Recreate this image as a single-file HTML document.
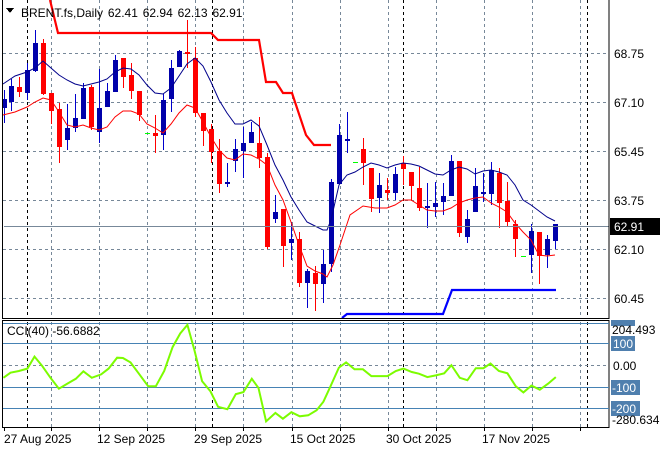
<!DOCTYPE html>
<html><head><meta charset="utf-8"><style>
body{margin:0;background:#fff;width:660px;height:450px;overflow:hidden;font-family:"Liberation Sans",sans-serif}
svg{position:absolute;left:0;top:0}
text{font-family:"Liberation Sans",sans-serif;font-size:12px;fill:#000}
</style></head><body>
<svg id="s" width="660" height="450" viewBox="0 0 660 450" xmlns="http://www.w3.org/2000/svg" shape-rendering="crispEdges">
<g id="grid" stroke="#778899" stroke-dasharray="3,3" stroke-width="1"></g>
<g id="cand"></g>
<polyline id="ma1" fill="none" stroke="#00008b" stroke-width="1" shape-rendering="auto"/>
<polyline id="ma2" fill="none" stroke="#ff0000" stroke-width="1" shape-rendering="auto"/>
<polyline fill="none" stroke="#ff0000" stroke-width="2.2" shape-rendering="auto" points="50,0 58,33 211,33 218,40 259,40 266,82 276,82 283,93 292,93 306,135 314,145 331,145"/>
<polyline fill="none" stroke="#0000ff" stroke-width="2.2" shape-rendering="auto" points="342,318 347,314 443,314 452,290 556,290"/>
<line x1="4" y1="226.5" x2="609" y2="226.5" stroke="#778899"/>
<rect x="2.5" y="-1" width="606.5" height="319.5" fill="none" stroke="#000"/>
<rect x="2.5" y="320.5" width="606.5" height="107" fill="none" stroke="#000"/>
<g font-size="12">
<text x="614" y="58">68.75</text><text x="614" y="107">67.10</text><text x="614" y="156">65.45</text>
<text x="614" y="205">63.75</text><text x="614" y="254">62.10</text><text x="614" y="303">60.45</text>
</g>
<rect x="610" y="218" width="50" height="17" fill="#000"/><text x="614" y="231" fill="#fff" style="fill:#fff">62.91</text>
<path d="M6,8 L14,8 L10,13 Z" fill="#000"/>
<text x="21" y="17" style="word-spacing:1.5px">BRENT.fs,Daily  62.41 62.94 62.13 62.91</text>
<text x="7" y="335">CCI(40) -56.6882</text>
<line x1="3" y1="323.5" x2="609" y2="323.5" stroke="#4682b4"/>
<line x1="3" y1="343.5" x2="609" y2="343.5" stroke="#4682b4"/>
<line x1="3" y1="365.5" x2="609" y2="365.5" stroke="#778899" stroke-dasharray="3,3"/>
<line x1="3" y1="387.5" x2="609" y2="387.5" stroke="#4682b4"/>
<line x1="3" y1="408.5" x2="609" y2="408.5" stroke="#4682b4"/>
<polyline id="cci" fill="none" stroke="#7cfc00" stroke-width="2" shape-rendering="auto"/>
<rect x="611" y="320" width="24" height="6" fill="#4f7fae"/>
<text x="612" y="334">204.493</text>
<rect x="611" y="336" width="24" height="15" fill="#4f7fae"/><text x="613" y="348" style="fill:#fff">100</text>
<text x="613" y="370">0.00</text>
<rect x="611" y="380" width="29" height="15" fill="#4f7fae"/><text x="612" y="392" style="fill:#fff">-100</text>
<rect x="611" y="401" width="29" height="15" fill="#4f7fae"/><text x="612" y="413" style="fill:#fff">-200</text>
<text x="612" y="424">-280.634</text>
<g id="ticks" stroke="#000"></g>
<text x="4" y="443">27 Aug 2025</text><text x="97" y="443">12 Sep 2025</text><text x="194" y="443">29 Sep 2025</text>
<text x="290" y="443">15 Oct 2025</text><text x="386" y="443">30 Oct 2025</text><text x="482" y="443">17 Nov 2025</text>
</svg>
<script>
var NS="http://www.w3.org/2000/svg";
function el(p,t,a){var e=document.createElementNS(NS,t);for(var k in a)e.setAttribute(k,a[k]);p.appendChild(e);return e;}
var g=document.getElementById('grid');
[53,102,151,200,249,298].forEach(function(y){el(g,'line',{x1:3,y1:y+.5,x2:609,y2:y+.5});});
var gx=[51,99,147,195,243,292,340,388,436,484,532,580];
gx.forEach(function(x){el(g,'line',{x1:x+.5,y1:0,x2:x+.5,y2:318});el(g,'line',{x1:x+.5,y1:322,x2:x+.5,y2:427});});
[27,212,403,587].forEach(function(x){el(g,'line',{x1:x+.5,y1:0,x2:x+.5,y2:318,stroke:'#000'});el(g,'line',{x1:x+.5,y1:322,x2:x+.5,y2:427,stroke:'#000'});});
var tk=document.getElementById('ticks');
[4,51,99,147,195,243,292,340,388,436,484,532,580].forEach(function(x){el(tk,'line',{x1:x+.5,y1:427,x2:x+.5,y2:431});});
var C=[[4,'b',99,108,90,123],[11,'b',86,102,79,111],[19,'r',87,92,77,97],[27,'b',70,93,63,100],[35,'b',43,71,30,72],[43,'r',43,94,39,95],[51,'r',93,111,93,124],[59,'r',109,147,103,163],[67,'b',128,140,104,150],[75,'b',118,128,94,132],[83,'b',88,119,83,119],[91,'r',87,127,85,130],[99,'b',108,132,69,143],[107,'b',91,107,83,107],[115,'b',60,92,55,92],[123,'r',58,77,58,88],[131,'r',75,91,63,99],[139,'r',91,115,91,121],[147,'g',133,133,133,133],[155,'r',133,136,115,153],[163,'b',100,135,94,150],[171,'b',68,99,60,112],[179,'b',51,67,50,67],[187,'r',52,53,20,68],[195,'r',58,113,47,117],[203,'r',113,131,113,146],[211,'r',129,152,124,163],[219,'r',151,184,139,193],[227,'b',182,184,163,187],[235,'b',149,161,139,172],[243,'b',143,151,127,178],[251,'b',132,143,122,143],[259,'r',143,158,117,168],[267,'r',157,247,153,249],[275,'b',212,219,195,223],[283,'r',209,246,209,267],[291,'b',239,243,222,260],[299,'r',239,283,232,287],[307,'b',271,283,269,308],[315,'r',273,284,266,311],[323,'b',264,284,250,303],[331,'b',182,264,179,272],[339,'b',135,184,124,184],[347,'b',139,141,112,153],[355,'g',162,162,162,162],[363,'r',149,163,138,185],[371,'r',168,199,168,212],[379,'b',185,198,173,213],[387,'r',190,193,178,200],[395,'b',174,193,167,200],[403,'r',163,169,156,185],[411,'r',172,186,172,200],[419,'r',188,208,167,211],[427,'b',206,208,183,228],[435,'b',203,207,182,217],[443,'b',196,202,183,215],[451,'b',161,196,155,196],[459,'r',161,233,161,237],[467,'b',219,237,210,243],[475,'b',186,212,168,212],[483,'b',192,194,173,202],[491,'b',170,194,162,205],[499,'r',173,203,168,228],[507,'r',201,222,182,227],[515,'r',224,239,220,257],[523,'g',256,256,256,256],[531,'b',231,255,224,273],[539,'r',232,256,232,284],[547,'b',239,255,235,268],[555,'b',224,241,224,249]];
var cg=document.getElementById('cand');
C.forEach(function(c){var col=c[1]=='b'?'#0000cd':c[1]=='r'?'#ff0000':'#00ff00';var x=c[0];
if(c[1]=='g'){el(cg,'rect',{x:x-2,y:c[2],width:5,height:1,fill:col});return;}
el(cg,'rect',{x:x,y:c[4],width:1,height:c[5]-c[4],fill:col});
var h=Math.max(2,c[3]-c[2]);el(cg,'rect',{x:x-2,y:c[2],width:5,height:h,fill:col});
if(c[1]=='b')el(cg,'rect',{x:x-2,y:c[2],width:5,height:h,fill:'#0000aa'});});
document.getElementById('ma1').setAttribute('points',"3,84 15,76 27,72 35,68 43,61 51,68 59,75 67,80 75,84 83,86 91,84 99,82 107,79 115,72 123,68 131,69 139,75 147,85 155,93 163,94 171,88 179,76 187,64 195,58 203,66 211,82 219,100 227,113 235,124 243,124 251,120 259,126 267,145 275,165 283,180 291,197 299,210 307,222 315,226 323,230 327,230 331,220 339,185 347,175 355,172 363,167 371,163 379,165 387,168 395,165 403,163 411,164 419,166 427,170 435,174 443,175 451,170 459,167 467,169 475,174 483,171 491,170 499,172 507,175 515,185 523,200 531,205 539,211 547,217 555,221");
document.getElementById('ma2').setAttribute('points',"3,115 15,112 27,107 35,102 43,98 51,100 59,112 67,125 75,127 83,125 91,128 99,130 107,127 115,117 123,111 131,111 139,114 147,124 155,128 163,133 171,124 179,113 187,105 195,108 203,122 211,137 219,150 227,158 235,160 243,154 251,155 259,159 267,165 275,185 283,200 291,222 299,245 307,266 315,271 323,274 327,277 333,265 340,245 350,215 363,206 375,208 387,208 395,205 403,200 411,200 419,205 427,210 435,211 443,211 451,208 459,203 467,200 475,198 483,197 491,203 499,207 507,212 515,223 523,232 531,240 539,255 547,256 555,255");
var P=[[8,205],[25,190],[45,185],[65,178],[82,143],[100,170],[120,205],[140,237],[160,222],[180,208],[198,186],[218,205],[240,195],[258,178],[278,146],[292,147],[310,160],[330,193],[352,230],[370,230],[390,185],[410,115],[428,75],[445,50],[462,125],[480,215],[500,245],[518,290],[540,297],[560,253],[578,247],[598,208],[614,235],[632,333],[654,308],[672,325],[692,306],[712,318],[732,315],[752,300],[768,275],[785,230],[805,175],[822,160],[842,180],[862,180],[882,200],[920,200],[940,185],[958,178],[978,188],[995,193],[1015,203],[1035,198],[1055,192],[1072,168],[1092,205],[1110,212],[1130,177],[1148,177],[1165,163],[1185,185],[1205,192],[1225,230],[1243,248],[1262,228],[1282,240],[1302,222],[1320,203]];
document.getElementById('cci').setAttribute('points',P.map(function(p){return (p[0]/2.375).toFixed(1)+","+(343+(p[1]-103)*0.341).toFixed(1);}).join(" "));
</script>
</body></html>
